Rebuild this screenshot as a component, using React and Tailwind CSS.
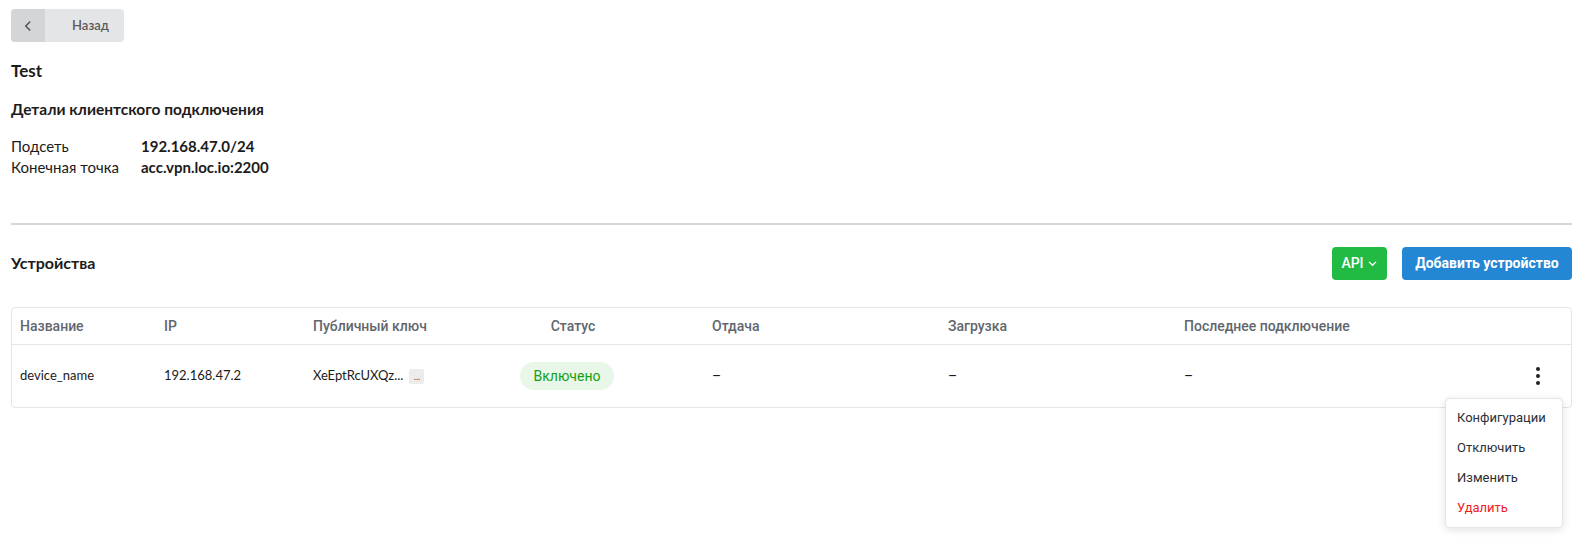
import React from 'react';

const lato = { fontFamily: 'Lato, "Noto Sans", sans-serif' };

function BackButton() {
  return (
    <button className="flex h-[33px] w-[113px] items-stretch overflow-hidden rounded-[4px] bg-[#e4e5e6]">
      <span className="flex w-[34px] items-center justify-center bg-[#d4d5d6]">
        <svg width="14" height="14" viewBox="0 0 24 24" fill="none" stroke="#555" strokeWidth="2.6" strokeLinecap="round" strokeLinejoin="round">
          <path d="M15 5l-7 7 7 7" />
        </svg>
      </span>
      <span className="flex flex-1 items-center justify-center pl-[12px] text-[13px] font-semibold text-[#5a5a5a]">Назад</span>
    </button>
  );
}

function RowMenu() {
  // dropdown that is open under the kebab button
  return (
    <div className="absolute right-[8px] top-[90px] z-10 w-[118px] rounded-[5px] border border-[#e4e6ea] bg-white py-[4px] shadow-[0_2px_8px_rgba(0,0,0,0.12)] font-['Roboto',sans-serif] text-[13px]">
      <div className="flex h-[30px] items-center px-[11px] text-[#2b2f36]">Конфигурации</div>
      <div className="flex h-[30px] items-center px-[11px] text-[#2b2f36]">Отключить</div>
      <div className="flex h-[30px] items-center px-[11px] text-[#2b2f36]">Изменить</div>
      <div className="flex h-[30px] items-center px-[11px] text-[#f0201f]">Удалить</div>
    </div>
  );
}

export default function App() {
  const cols = 'grid grid-cols-[144px_149px_125px_274px_236px_236px_1fr_72px]';
  return (
    <div className="min-h-screen bg-white px-[11px] pt-[9px] text-[#1b1b1b]" style={lato}>
      <BackButton />

      <h1 className="mt-[17px] text-[17px] font-bold leading-[24px]">Test</h1>
      <h2 className="mt-[16px] text-[15.5px] font-bold leading-[20px]">Детали клиентского подключения</h2>

      <div className="mt-[17px] text-[15px] leading-[21px]">
        <div className="flex">
          <span className="w-[130px]">Подсеть</span>
          <span className="font-bold">192.168.47.0/24</span>
        </div>
        <div className="flex">
          <span className="w-[130px]">Конечная точка</span>
          <span className="font-bold">acc.vpn.loc.io:2200</span>
        </div>
      </div>

      <div className="mt-[45px] h-[2px] bg-[#d6d6d6]" />

      <div className="mt-[22px] flex items-center justify-between">
        <h2 className="pb-[2px] text-[16px] font-bold">Устройства</h2>
        <div className="flex items-center gap-[15px] font-['Roboto',sans-serif]">
          <button className="flex h-[33px] w-[55px] items-center justify-center gap-[3px] rounded-[4px] bg-[#21bb43] text-[14px] font-medium text-white">
            API
            <svg width="11" height="11" viewBox="0 0 24 24" fill="none" stroke="white" strokeWidth="3" strokeLinecap="round" strokeLinejoin="round">
              <path d="M5 9l7 7 7-7" />
            </svg>
          </button>
          <button className="h-[33px] w-[170px] rounded-[4px] bg-[#2387d3] text-[14px] font-bold text-white">
            Добавить устройство
          </button>
        </div>
      </div>

      <div className="relative mt-[27px] rounded-[4px] border border-[#e2e5ea]">
        <div className={`${cols} h-[37px] items-center border-b border-[#e2e5ea] font-['Roboto',sans-serif] text-[14px] font-medium text-[#62666d]`}>
          <div className="pl-[8px]">Название</div>
          <div className="pl-[8px]">IP</div>
          <div className="pl-[8px]">Публичный ключ</div>
          <div className="pl-[12px] text-center">Статус</div>
          <div className="pl-[8px]">Отдача</div>
          <div className="pl-[8px]">Загрузка</div>
          <div className="pl-[8px]">Последнее подключение</div>
          <div />
        </div>
        <div className={`${cols} h-[62px] items-center text-[13px]`}>
          <div className="pl-[8px]">device_name</div>
          <div className="pl-[8px]">192.168.47.2</div>
          <div className="flex items-center gap-[6px] pl-[8px]">
            <span>XeEptRcUXQz...</span>
            <span className="flex h-[15px] w-[15px] items-center justify-center rounded-[2px] bg-[#ececec] text-[9px] leading-none text-[#555]">...</span>
          </div>
          <div className="flex justify-center">
            <span className="flex h-[28px] w-[94px] items-center justify-center rounded-full bg-[#e8f7e8] font-['Roboto',sans-serif] text-[14px] text-[#14a014]">Включено</span>
          </div>
          <div className="pl-[8px] font-['Roboto',sans-serif] text-[14px]">–</div>
          <div className="pl-[8px] font-['Roboto',sans-serif] text-[14px]">–</div>
          <div className="pl-[8px] font-['Roboto',sans-serif] text-[14px]">–</div>
          <div className="flex justify-center pl-[6px]">
            <svg width="6" height="20" viewBox="0 0 6 20" fill="#222">
              <circle cx="3" cy="3" r="2" />
              <circle cx="3" cy="10" r="2" />
              <circle cx="3" cy="17" r="2" />
            </svg>
          </div>
        </div>
        <RowMenu />
      </div>
    </div>
  );
}
